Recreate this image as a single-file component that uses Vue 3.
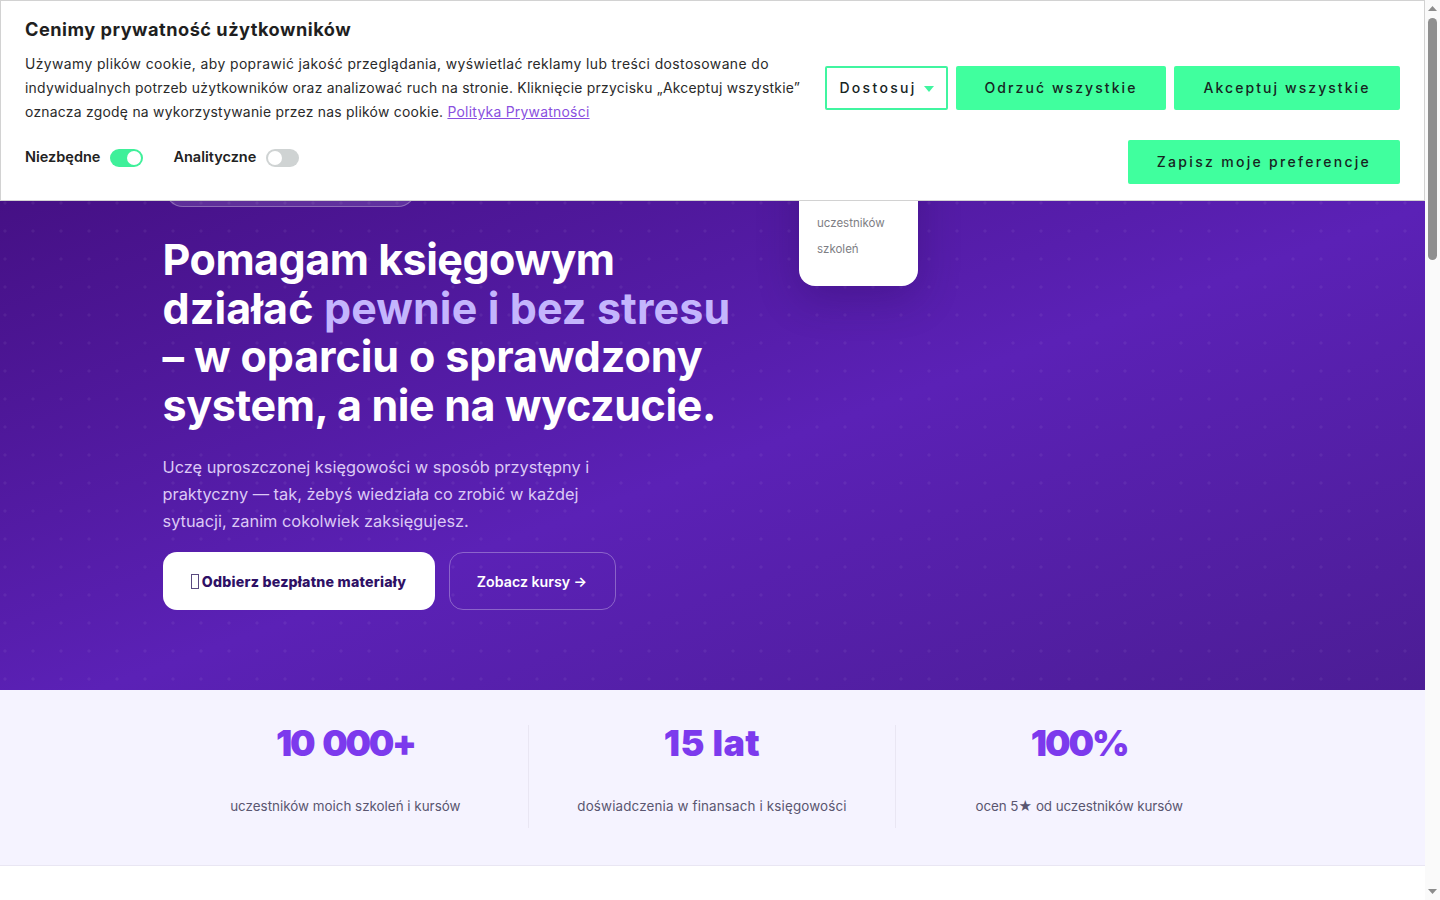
<script setup>
const stats = [
  { value: '10 000+', label: 'uczestników moich szkoleń i kursów', valueSpacing: '-2.3px', wordSpacing: '4px', labelSpacing: '0px' },
  { value: '15 lat', label: 'doświadczenia w finansach i księgowości', valueSpacing: '0.4px', wordSpacing: '0px', labelSpacing: '0.15px' },
  { value: '100%', label: 'ocen 5★ od uczestników kursów', valueSpacing: '-2px', wordSpacing: '0px', labelSpacing: '-0.08px' }
]
</script>

<template>
  <div class="page">
    <div class="content">
      <section class="cookie">
        <div class="cookie-left">
          <h2 class="cookie-title">Cenimy prywatność użytkowników</h2>
          <p class="cookie-text">
            <span class="l1">Używamy plików cookie, aby poprawić jakość przeglądania, wyświetlać reklamy lub treści dostosowane do</span>
            <span class="l2">indywidualnych potrzeb użytkowników oraz analizować ruch na stronie. Kliknięcie przycisku „Akceptuj wszystkie”</span>
            <span class="l3">oznacza zgodę na wykorzystywanie przez nas plików cookie. <a class="cookie-link">Polityka Prywatności</a></span>
          </p>
          <div class="toggles">
            <span class="toggle-label">Niezbędne</span>
            <span class="switch on"><i></i></span>
            <span class="toggle-label second">Analityczne</span>
            <span class="switch"><i></i></span>
          </div>
        </div>
        <div class="cookie-right">
          <div class="btn-row">
            <button class="cbtn outline"><span>Dostosuj</span> <b class="caret"></b></button>
            <button class="cbtn reject"><span>Odrzuć wszystkie</span></button>
            <button class="cbtn accept"><span>Akceptuj wszystkie</span></button>
          </div>
          <button class="cbtn save"><span>Zapisz moje preferencje</span></button>
        </div>
      </section>

      <section class="hero">
        <div class="hero-inner">
          <div class="hero-main">
            <div class="pill"></div>
            <h1 class="headline">
              <span class="h1">Pomagam księgowym</span>
              <span class="h2">działać <span class="accent">pewnie i bez stresu</span></span>
              <span class="h3">– w oparciu o sprawdzony</span>
              <span class="h4">system, a nie na wyczucie.</span>
            </h1>
            <p class="lead">
              Uczę uproszczonej księgowości w sposób przystępny i<br>
              praktyczny — tak, żebyś wiedziała co zrobić w każdej<br>
              sytuacji, zanim cokolwiek zaksięgujesz.
            </p>
            <div class="cta">
              <a class="btn-white"><span class="tofu"></span>Odbierz bezpłatne materiały</a>
              <a class="btn-ghost">Zobacz kursy →</a>
            </div>
          </div>
          <aside class="card">
            <span>uczestników</span>
            <span>szkoleń</span>
          </aside>
        </div>
      </section>

      <section class="stats">
        <div class="stats-grid">
          <div v-for="s in stats" :key="s.value" class="stat">
            <div class="stat-value" :style="{ letterSpacing: s.valueSpacing, wordSpacing: s.wordSpacing }">{{ s.value }}</div>
            <div class="stat-label" :style="{ letterSpacing: s.labelSpacing }">{{ s.label }}</div>
          </div>
        </div>
      </section>
    </div>

    <div class="scrollbar">
      <svg class="arrow" width="15" height="17" viewBox="0 0 15 17"><path d="M3 11 L7.5 6 L12 11 Z" fill="#8c8c8c"/></svg>
      <div class="track"><div class="thumb"></div></div>
      <svg class="arrow" width="15" height="17" viewBox="0 0 15 17"><path d="M3 6 L12 6 L7.5 11 Z" fill="#8c8c8c"/></svg>
    </div>
  </div>
</template>

<style>
html, body { margin: 0; background: #fff; overflow: hidden; }
</style>

<style scoped>
.page {
  display: flex;
  width: 1440px;
  height: 900px;
  overflow: hidden;
  font-family: Inter, "Noto Sans", sans-serif;
}
.content { width: 1425px; position: relative; }

/* cookie bar */
.cookie {
  position: absolute;
  top: 0;
  left: 0;
  z-index: 5;
  box-sizing: border-box;
  width: 1425px;
  height: 201px;
  display: flex;
  justify-content: space-between;
  padding: 17px 24px 0;
  background: #fff;
  border: 1px solid #d2d2d2;
}
.cookie-title {
  margin: 0;
  font-size: 18.2px;
  line-height: 22px;
  font-weight: 700;
  letter-spacing: 0.49px;
  color: #1f1f1f;
}
.cookie-text {
  margin: 12px 0 0;
  font-size: 13.9px;
  line-height: 24px;
  color: #2a2a2a;
  white-space: nowrap;
}
.cookie-text span { display: block; }
.l1 { letter-spacing: 0.41px; }
.l2 { letter-spacing: 0.26px; }
.l3 { letter-spacing: 0.26px; }
.cookie-link { color: #8a4fe0; text-decoration: underline; }
.toggles { display: flex; align-items: center; margin-top: 21px; }
.toggle-label { font-size: 14.5px; font-weight: 600; color: #222; line-height: 24px; }
.toggle-label.second { margin-left: 30px; }
.switch {
  position: relative;
  width: 33px;
  height: 18px;
  margin-left: 10px;
  margin-top: 2px;
  border-radius: 9px;
  background: #cfd3d3;
}
.switch i {
  position: absolute;
  top: 2px;
  left: 2px;
  width: 14px;
  height: 14px;
  border-radius: 50%;
  background: #fff;
}
.switch.on { background: #3ff09a; }
.switch.on i { left: 17px; }

.cookie-right {
  display: flex;
  flex-direction: column;
  align-items: flex-end;
  padding-top: 48px;
  gap: 30px;
}
.btn-row { display: flex; gap: 8px; }
.cbtn {
  height: 44px;
  box-sizing: border-box;
  border: 0;
  border-radius: 2px;
  background: #40ff9e;
  color: #17251f;
  font-family: inherit;
  font-size: 14px;
  font-weight: 500;
  letter-spacing: 2.07px;
  padding: 0;
  display: flex;
  align-items: center;
  justify-content: center;
}
.cbtn span { margin-top: -2px; }
.outline {
  width: 123px;
  background: #fff;
  border: 2px solid #40f5a0;
  gap: 7px;
  letter-spacing: 2.3px;
}
.caret {
  width: 0;
  height: 0;
  margin-top: 1px;
  border-left: 5px solid transparent;
  border-right: 5px solid transparent;
  border-top: 6px solid #40f5a0;
}
.reject { width: 210px; }
.accept { width: 226px; }
.save { width: 272px; letter-spacing: 2.3px; }

/* hero */
.hero {
  box-sizing: border-box;
  height: 690px;
  padding-top: 100px;
  background-color: #4c1a94;
  background-image:
    radial-gradient(circle, rgba(255, 255, 255, 0.055) 1.2px, transparent 2px),
    linear-gradient(160deg, #3d0a72 0%, #5b21b6 60%, #4c1d95 100%);
  background-size: 28px 28px, 100% 100%;
  background-position: -9px -7px, 0 0;
}
.hero-inner {
  display: flex;
  width: 1100px;
  margin: 0 auto;
}
.hero-main { width: 636.5px; padding-top: 70px; }
.pill {
  width: 251px;
  height: 37px;
  margin-left: 2px;
  box-sizing: border-box;
  border-radius: 18px;
  background: rgba(255, 255, 255, 0.12);
  border: 1px solid rgba(255, 255, 255, 0.28);
}
.headline {
  margin: 28px 0 0;
  font-size: 43px;
  line-height: 48.6px;
  font-weight: 700;
  color: #fff;
  white-space: nowrap;
}
.headline > span { display: block; }
.h1 { letter-spacing: -0.5px; }
.h2 { letter-spacing: 0.12px; }
.h3 { letter-spacing: -0.1px; }
.h4 { letter-spacing: -0.37px; }
.accent { color: #c4b5fd; }
.lead {
  margin: 25px 0 0;
  font-size: 16.35px;
  line-height: 27px;
  color: #dcc9f5;
}
.cta { display: flex; gap: 14px; margin-top: 17px; }
.btn-white, .btn-ghost {
  box-sizing: border-box;
  height: 58px;
  display: flex;
  align-items: center;
  justify-content: center;
  font-size: 14.2px;
  font-weight: 800;
  border-radius: 14px;
}
.btn-white { width: 272px; background: #fff; color: #2e1065; letter-spacing: 0.22px; }
.tofu {
  width: 8px;
  height: 15px;
  box-sizing: border-box;
  margin-right: 3px;
  border: 1px solid #5a4a80;
}
.btn-ghost {
  width: 167px;
  font-weight: 600;
  color: #fff;
  border: 1px solid rgba(255, 255, 255, 0.3);
}
.card {
  display: flex;
  flex-direction: column;
  gap: 8px;
  box-sizing: border-box;
  width: 119px;
  height: 186px;
  padding: 114px 17px 0 18px;
  background: #fff;
  border-radius: 16px;
  box-shadow: 0 12px 40px rgba(30, 5, 70, 0.25);
  font-size: 11.5px;
  line-height: 18px;
  color: #7e7e84;
}

/* stats */
.stats {
  box-sizing: border-box;
  height: 176px;
  padding-top: 35px;
  background: #f5f3ff;
  border-bottom: 1px solid #e9e6f3;
}
.stats-grid {
  display: grid;
  grid-template-columns: repeat(3, 1fr);
  width: 1100px;
  margin: 0 auto;
}
.stat {
  height: 103px;
  text-align: center;
  border-right: 1px solid #e9e6f3;
}
.stat:last-child { border-right: 0; }
.stat-value {
  font-size: 36px;
  line-height: 36px;
  font-weight: 900;
  color: #7c3aed;
}
.stat-label {
  margin-top: 35px;
  font-size: 13.4px;
  line-height: 20px;
  color: #5a5670;
}

/* scrollbar */
.scrollbar {
  display: flex;
  flex-direction: column;
  width: 15px;
  height: 900px;
  background: #fafafa;
}
.arrow { display: block; flex: none; }
.track { flex: 1; }
.thumb {
  width: 9px;
  height: 242px;
  margin: 1px 0 0 3px;
  border-radius: 5px;
  background: #8f8f8f;
}
</style>
